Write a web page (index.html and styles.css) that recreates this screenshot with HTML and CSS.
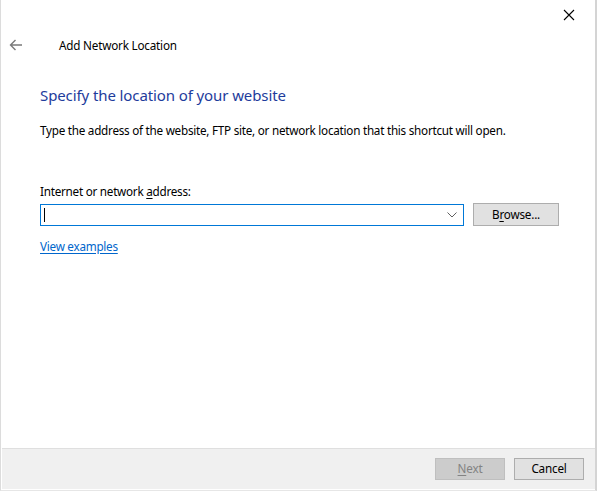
FILE: index.html
```html
<!DOCTYPE html>
<html lang="en">
<head>
<meta charset="utf-8">
<title>Add Network Location</title>
<link rel="stylesheet" href="styles.css">
</head>
<body>
<div class="window">
  <div class="titlebar">
    <button class="close" aria-label="Close">
      <svg width="12" height="12" viewBox="0 0 12 12"><path d="M1 1L11 11M11 1L1 11" stroke="#000" stroke-width="1.1" fill="none"/></svg>
    </button>
  </div>
  <div class="navbar">
    <span class="back" aria-label="Back">
      <svg width="14" height="12" viewBox="0 0 14 12"><path d="M13 6H1.5M6.5 1L1.5 6L6.5 11" stroke="#7a7a7a" stroke-width="1.4" fill="none"/></svg>
    </span>
    <span class="wizard-title">Add Network Location</span>
  </div>
  <main class="content">
    <h1 class="heading">Specify the location of your website</h1>
    <p class="intro">Type the address of the website, FTP site, or network location that this shortcut will open.</p>
    <label class="field-label" for="addr">Internet or network <u>a</u>ddress:</label>
    <div class="field-row">
      <div class="combo">
        <span class="caret"></span>
        <input id="addr" class="combo-input" type="text">
        <svg class="chevron" width="10" height="6" viewBox="0 0 10 6"><path d="M0.5 0.5L5 5L9.5 0.5" stroke="#606060" stroke-width="1" fill="none"/></svg>
      </div>
      <button class="btn">B<u>r</u>owse...</button>
    </div>
    <a class="examples" href="#">View examples</a>
  </main>
  <footer class="footer">
    <button class="btn btn-disabled"><u>N</u>ext</button>
    <button class="btn">Cancel</button>
  </footer>
</div>
</body>
</html>
```
FILE: styles.css
```css
html, body {
  margin: 0;
  padding: 0;
  background: #ffffff;
}

body {
  font-family: "Noto Sans", "Open Sans", sans-serif;
  font-size: 11.7px;
  color: #000;
}

.window {
  width: 597px;
  height: 491px;
  box-sizing: border-box;
  border-left: 1px solid #dcdcdc;
  border-right: 2px solid #d4d4d4;
  border-bottom: 1px solid #e6e6e6;
  display: flex;
  flex-direction: column;
  background: #fff;
}

.titlebar {
  height: 30px;
  display: flex;
  justify-content: flex-end;
}

.close {
  width: 46px;
  height: 30px;
  border: 0;
  background: transparent;
  padding: 0;
  display: flex;
  align-items: center;
  justify-content: center;
  margin-right: 3px;
}

.navbar {
  height: 30px;
  display: flex;
  align-items: center;
}

.back {
  width: 14px;
  height: 12px;
  margin-left: 8px;
  display: flex;
}

.wizard-title {
  margin-left: 36px;
  font-size: 11.7px;
  color: #000;
  letter-spacing: -0.2px;
}

.content {
  flex: 1;
  padding: 24px 0 0 39px;
}

.heading {
  margin: 0;
  font-size: 15px;
  font-weight: normal;
  color: #1e3c9c;
  line-height: 22px;
  letter-spacing: -0.1px;
}

.intro {
  margin: 15px 0 0 0;
  line-height: 18px;
  letter-spacing: -0.25px;
}

.field-label {
  display: block;
  margin-top: 44px;
  line-height: 16px;
  letter-spacing: -0.25px;
}

.field-label u, .btn u {
  text-decoration-thickness: 1px;
  text-underline-offset: 2px;
}

.field-row {
  display: flex;
  align-items: center;
  gap: 9px;
  margin-top: 4px;
}

.combo {
  position: relative;
  width: 424px;
  height: 22px;
  box-sizing: border-box;
  border: 1px solid #0078d7;
  display: flex;
  align-items: center;
}

.combo-input {
  flex: 1;
  min-width: 0;
  border: 0;
  outline: none;
  background: transparent;
  height: 18px;
  padding: 0;
}

.caret {
  position: absolute;
  left: 3px;
  top: 3px;
  width: 1px;
  height: 14px;
  background: #000;
}

.chevron {
  margin-right: 6px;
}

.btn {
  font-family: inherit;
  font-size: 11.7px;
  letter-spacing: -0.2px;
  width: 86px;
  height: 23px;
  box-sizing: border-box;
  border: 1px solid #adadad;
  background: #e1e1e1;
  color: #000;
  padding: 0 0 2px;
}

.examples {
  display: inline-block;
  margin-top: 12px;
  color: #0066cc;
  text-decoration: underline;
  text-underline-offset: 2px;
  letter-spacing: -0.25px;
}

.footer {
  height: 40px;
  margin: 0 0 1px 1px;
  background: #f0f0f0;
  border-top: 1px solid #dfdfdf;
  display: flex;
  align-items: center;
  justify-content: flex-end;
  gap: 9px;
  padding-right: 11px;
}

.footer .btn {
  width: 70px;
  height: 22px;
}

.btn-disabled {
  background: #cccccc;
  border-color: #bfbfbf;
  color: #838383;
}
```
